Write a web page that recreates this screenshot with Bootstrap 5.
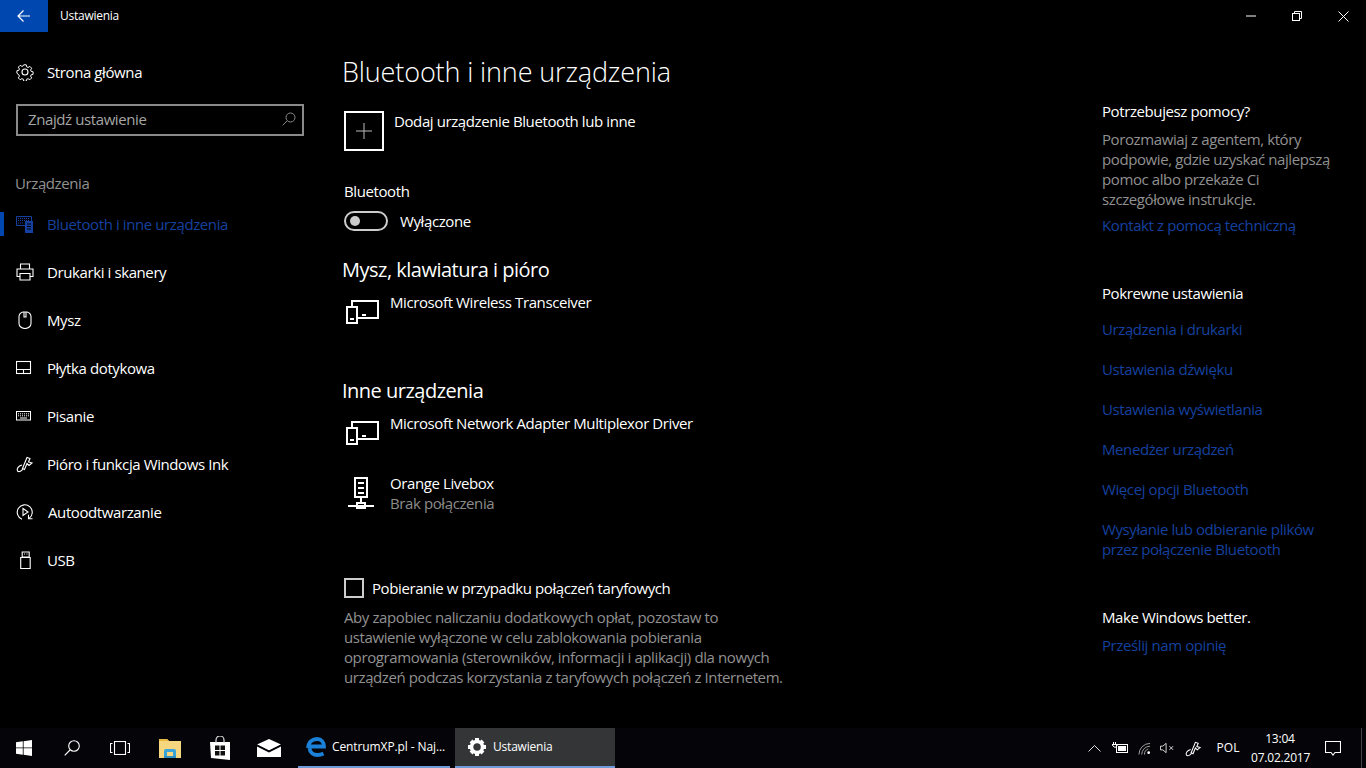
<!DOCTYPE html>
<html lang="pl"><head><meta charset="utf-8"><title>Ustawienia</title>
<link rel="stylesheet" href="https://cdn.jsdelivr.net/npm/bootstrap@5.3.0/dist/css/bootstrap.min.css">
<style>
html,body{height:100%;margin:0;background:#000;overflow:hidden}
body{font-family:"Open Sans","Noto Sans",sans-serif;font-size:15px;line-height:20px;color:#fff;letter-spacing:-.4px}
.shell{height:768px;width:1366px}
.titlebar{height:32px;flex:none}
.backbtn{width:48px;height:32px;background:#0047b0}
.apptitle{font-size:12px;margin-left:12px;letter-spacing:-.25px}
.winbtn{width:46px;height:32px}
.main{height:696px}
.side{width:320px;flex:none}
.homerow{height:48px;margin-top:16px;padding-left:16px}
.navicon{width:18px;height:18px;margin-right:13px;flex:none}
.searchbox{margin:8px 16px 0;height:32px;width:288px;border:2px solid #8a8a8a;padding:0 6px 2px 10px;color:#a6a6a6}
.sidehead{margin:37px 0 0 15px;height:20px;color:#919191}
.navrow{height:48px;padding-left:16px}
.navrow.sel{color:#15409f;border-left:4px solid #0047b0;padding-left:12px;height:24px;margin:19px 0 12px}
.autolabel{margin-left:1px}
.centerpane{width:760px;flex:none;padding-left:22px}
.pagetitle{font-size:27px;line-height:32px;font-weight:300;margin:24px 0 0;letter-spacing:-.13px}
.addrow{margin:23px 0 0 2px;height:40px}
.addbox{width:40px;height:40px;border:2px solid #fff;margin-right:10px}
.btlabel{margin:30px 0 0 2px}
.togglerow{margin:10px 0 0 2px;height:20px}
.switchy{width:44px;height:20px;border:2px solid #ccc;border-radius:10px;padding-left:4px;margin-right:12px}
.switchy i{display:block;width:10px;height:10px;border-radius:50%;background:#ccc}
.sect{font-size:20px;line-height:28px;margin:0;letter-spacing:-.5px}
.sect1{margin-top:25px}
.sect2{margin-top:25px}
.devrow{height:60px;margin-left:2px}
.devrow1{margin-top:8px}
.devicon{width:46px;height:40px;flex:none}
.dim{color:#8c8c8c}
.checkrow{margin:45px 0 0 2px;height:20px}
.checkboxy{width:20px;height:20px;border:2px solid #ccc;margin-right:8px}
.meter{margin:9px 0 0 2px;width:445px;color:#919191}
.rightpane{padding-left:22px;width:286px}
.righthead{margin-top:69px}
.helptext{margin-top:8px;color:#919191;width:240px}
.blue{color:#15409f;text-decoration:none;display:block;width:225px}
.h2blue{margin-top:6px}
.related{margin-top:48px}
.linkstack{margin-top:16px}
.linkstack .blue{margin-bottom:20px}
.better{margin-top:48px}
.taskbar{height:40px;flex:none;background:#050509}
.tbicon{width:48px;height:40px;flex:none}
.tbfile{width:50px;margin-left:1px}
.tbstore{width:49px}
.tbmail{width:50px}
.tbedge{width:152px;height:40px;margin-left:4px;border-bottom:2px solid #6f9bd8;padding-left:8px;font-size:12px;letter-spacing:-.1px}
.tbedge svg{margin-right:6px}
.tbset{width:160px;height:40px;margin-left:5px;background:#333537;border-bottom:2px solid #6f9bd8;padding-left:13px;font-size:12px;letter-spacing:-.2px}
.tbset svg{margin-right:7px}
.tbspace{flex:1}
.tray{width:25px;height:40px;flex:none}
.trayvol{width:20px}
.traypen{width:24px;margin-left:4px}
.lang{width:46px;margin-left:0;font-size:12px;letter-spacing:0;text-align:center}
.clock{width:58px;font-size:12px;line-height:19px;text-align:center;letter-spacing:-.2px}
.traynote{width:48px}
.peek{width:5px;height:40px;border-left:1px solid #444;margin-left:4px}
svg{display:block}
</style></head><body>
<div class="shell d-flex flex-column">
 <div class="titlebar d-flex align-items-center">
  <div class="backbtn d-flex align-items-center justify-content-center"><svg width="16" height="14" viewBox="0 0 16 14" fill="none" stroke="#fff" stroke-width="1.2"><path d="M2 7H14M7.500 1.500 2 7l5.500 5.500"/></svg></div>
  <div class="apptitle">Ustawienia</div>
  <div class="ms-auto d-flex">
   <div class="winbtn d-flex align-items-center justify-content-center"><svg width="10" height="2" viewBox="0 0 10 2"><path d="M0 1H10" stroke="#fff"/></svg></div>
   <div class="winbtn d-flex align-items-center justify-content-center"><svg width="10" height="10" viewBox="0 0 10 10" fill="none" stroke="#fff"><rect x=".5" y="2.500" width="7" height="7"/><path d="M2.500 2.500V.5h7v7h-2"/></svg></div>
   <div class="winbtn d-flex align-items-center justify-content-center"><svg width="11" height="11" viewBox="0 0 11 11" stroke="#fff"><path d="M.5.5l10 10M10.500.5l-10 10"/></svg></div>
  </div>
 </div>
 <div class="main d-flex">
  <div class="side">
   <div class="homerow d-flex align-items-center"><svg class="navicon" viewBox="0 0 18 18" fill="none" stroke="#fff" stroke-width="1.100"><circle cx="9" cy="9" r="3"/><path d="M7.600 1h2.800l.5 2.300 1.500.7 2-1.200 2 2-1.200 2 .6 1.500 2.200.5v2.800l-2.200.5-.6 1.500 1.200 2-2 2-2-1.200-1.500.6-.5 2.300H7.600l-.5-2.300-1.500-.6-2 1.200-2-2 1.200-2-.6-1.500L0 10.400V7.600l2.200-.5.600-1.500-1.200-2 2-2 2 1.200 1.500-.7z" transform="translate(.9 .9) scale(.9)"/></svg><span>Strona główna</span></div>
   <div class="searchbox d-flex align-items-center justify-content-between"><span>Znajdź ustawienie</span><svg width="14" height="14" viewBox="0 0 14 14" fill="none" stroke="#8a8a8a"><circle cx="8.500" cy="5.500" r="4.500"/><path d="M5 9 .7 13.300"/></svg></div>
   <div class="sidehead">Urządzenia</div>
   <div>
    <div class="navrow sel d-flex align-items-center"><svg class="navicon" viewBox="0 0 18 18" fill="none" stroke="#15409f"><path d="M.5 1.500h15v7H9.500v2H.5z"/><path d="M2 3.500h11M2 5.500h11M2 8h6" stroke-dasharray="1 1"/><rect x="9.500" y="6.500" width="7" height="11" fill="#15409f"/><path d="M11 9h4M11 11.500h4M11 14h4" stroke="#000"/></svg><span>Bluetooth i inne urządzenia</span></div>
    <div class="navrow d-flex align-items-center"><svg class="navicon" viewBox="0 0 18 18" fill="none" stroke="#fff" stroke-width="1.100"><path d="M4.500 6V1h9v5M4 13.500H1V6h16v7.500h-3"/><path d="M4 10.500h10v6.500H4z"/></svg><span>Drukarki i skanery</span></div>
    <div class="navrow d-flex align-items-center"><svg class="navicon" viewBox="0 0 18 18" fill="none" stroke="#fff" stroke-width="1.100"><path d="M3 5.500a5.500 5 0 0 1 4-4.500h4a5.500 5 0 0 1 4 4.500v7a6 5 0 0 1-12 0zM8 1v5h2V1"/></svg><span>Mysz</span></div>
    <div class="navrow d-flex align-items-center"><svg class="navicon" viewBox="0 0 18 18" fill="none" stroke="#fff" stroke-width="1.100"><rect x=".5" y="2.500" width="14" height="12"/><path d="M.5 10.500h14M7.500 10.500v4"/></svg><span>Płytka dotykowa</span></div>
    <div class="navrow d-flex align-items-center"><svg class="navicon" viewBox="0 0 18 18" fill="none" stroke="#fff"><rect x=".5" y="4.500" width="14" height="8.500"/><path d="M2 6.800h11M2 8.800h11" stroke-dasharray="1 1"/><path d="M4 11h7"/></svg><span>Pisanie</span></div>
    <div class="navrow d-flex align-items-center"><svg class="navicon" viewBox="0 0 18 18" fill="none" stroke="#fff" stroke-width="1.100"><path d="M6.500 13.500 11 2.500l3 1-1.500 3.500 3.500 1-3 2.500-2-2-2.500 6zM6 10C2 11 .5 14 1.500 16c1.500 1.500 4.500 0 5.500-2.500"/></svg><span>Pióro i funkcja Windows Ink</span></div>
    <div class="navrow d-flex align-items-center"><svg class="navicon" viewBox="0 0 18 18" fill="none" stroke="#fff" stroke-width="1.100"><path d="M6 16.300A7.500 7.500 0 1 1 13 15.500"/><path d="M7 5.500 12 9l-5 3.500z"/><path d="M12.500 11.800v4h4"/></svg><span class="autolabel">Autoodtwarzanie</span></div>
    <div class="navrow d-flex align-items-center"><svg class="navicon" viewBox="0 0 18 18" fill="none" stroke="#fff" stroke-width="1.100"><path d="M6.200 1h7v5h-7zM4.700 6.500h9.500v11H4.700z"/><path d="M8 3h1M10.500 3h1"/></svg><span>USB</span></div>
   </div>
  </div>
  <div class="centerpane">
   <h1 class="pagetitle">Bluetooth i inne urządzenia</h1>
   <div class="addrow d-flex"><div class="addbox d-flex align-items-center justify-content-center"><svg width="16" height="16" viewBox="0 0 16 16" stroke="#bbb"><path d="M8 0V16M0 8H16"/></svg></div><div>Dodaj urządzenie Bluetooth lub inne</div></div>
   <div class="btlabel">Bluetooth</div>
   <div class="togglerow d-flex align-items-center"><div class="switchy d-flex align-items-center"><i></i></div><span>Wyłączone</span></div>
   <h2 class="sect sect1">Mysz, klawiatura i pióro</h2>
   <div class="devrow devrow1 d-flex"><svg class="devicon" viewBox="0 0 46 40" fill="none" stroke="#fff" stroke-width="2"><path d="M8 14V9H34V26H14"/><rect x="3" y="15" width="10" height="16"/><path d="M6 27h4M18 23h4"/></svg><div>Microsoft Wireless Transceiver</div></div>
   <h2 class="sect sect2">Inne urządzenia</h2>
   <div class="devrow devrow1 d-flex"><svg class="devicon" viewBox="0 0 46 40" fill="none" stroke="#fff" stroke-width="2"><path d="M8 14V9H34V26H14"/><rect x="3" y="15" width="10" height="16"/><path d="M6 27h4M18 23h4"/></svg><div>Microsoft Network Adapter Multiplexor Driver</div></div>
   <div class="devrow d-flex"><svg class="devicon" viewBox="0 0 46 40" fill="none" stroke="#fff" stroke-width="2"><rect x="11" y="5" width="12" height="19"/><path d="M14 10h6M14 15h6M14 20h6M17 24v6M4 33h26"/><rect x="13" y="30" width="8" height="5"/></svg><div>Orange Livebox<div class="dim">Brak połączenia</div></div></div>
   <div class="checkrow d-flex align-items-center"><div class="checkboxy"></div><span>Pobieranie w przypadku połączeń taryfowych</span></div>
   <div class="meter">Aby zapobiec naliczaniu dodatkowych opłat, pozostaw to ustawienie wyłączone w celu zablokowania pobierania oprogramowania (sterowników, informacji i aplikacji) dla nowych urządzeń podczas korzystania z taryfowych połączeń z Internetem.</div>
  </div>
  <div class="rightpane">
   <div class="righthead">Potrzebujesz pomocy?</div>
   <div class="helptext">Porozmawiaj z agentem, który podpowie, gdzie uzyskać najlepszą pomoc albo przekaże Ci szczegółowe instrukcje.</div>
   <a class="blue h2blue" href="#">Kontakt z pomocą techniczną</a>
   <div class="related">Pokrewne ustawienia</div>
   <div class="linkstack">
    <a class="blue" href="#">Urządzenia i drukarki</a>
    <a class="blue" href="#">Ustawienia dźwięku</a>
    <a class="blue" href="#">Ustawienia wyświetlania</a>
    <a class="blue" href="#">Menedżer urządzeń</a>
    <a class="blue" href="#">Więcej opcji Bluetooth</a>
    <a class="blue" href="#">Wysyłanie lub odbieranie plików przez połączenie Bluetooth</a>
   </div>
   <div class="better">Make Windows better.</div>
   <a class="blue mt-2" href="#">Prześlij nam opinię</a>
  </div>
 </div>
 <div class="taskbar d-flex align-items-center">
  <div class="tbicon d-flex align-items-center justify-content-center"><svg width="16" height="16" viewBox="0 0 16 16" fill="#fff"><path d="M0 2.300 6.800 1.300V7.500H0zM7.600 1.200 16 0V7.500H7.600zM0 8.300H6.800V14.700L0 13.700zM7.600 8.300H16V16L7.600 14.800z"/></svg></div>
  <div class="tbicon d-flex align-items-center justify-content-center"><svg width="16" height="16" viewBox="0 0 16 16" fill="none" stroke="#fff" stroke-width="1.100"><circle cx="10" cy="6" r="5.300"/><path d="M6 10 .7 15.300"/></svg></div>
  <div class="tbicon d-flex align-items-center justify-content-center"><svg width="20" height="14" viewBox="0 0 20 14" fill="none" stroke="#fff" stroke-width="1.100"><rect x="4.500" y=".5" width="11" height="13"/><path d="M2.500 2.500H.5v9h2M17.500 2.500h2v9h-2"/></svg></div>
  <div class="tbicon tbfile d-flex align-items-center justify-content-center"><svg width="22" height="20" viewBox="0 0 22 20"><path d="M0 1h8l2 2h12v17H0z" fill="#f6d77f"/><path d="M0 1h8l2 2H0z" fill="#e8b93f"/><path d="M5 18v-5a2 2 0 0 1 2-2h8a2 2 0 0 1 2 2v5h-3v-4H8v4z" fill="#37a5d9"/><path d="M5 18h12v2H5z" fill="#2e8fc0"/></svg></div>
  <div class="tbicon tbstore d-flex align-items-center justify-content-center"><svg width="20" height="24" viewBox="0 0 20 24"><path d="M0 6H20V24L1 22z" fill="#fff"/><path d="M6 7V4a4 4 0 0 1 8 0v3" fill="none" stroke="#ddd" stroke-width="1.200"/><path d="M5 9.500h4.500V14H5zM10.500 9.500H15V14H10.500zM5 15h4.500v4.500H5zM10.500 15H15v4.500H10.500z" fill="#111"/></svg></div>
  <div class="tbicon tbmail d-flex align-items-center justify-content-center"><svg width="24" height="18" viewBox="0 0 24 18" fill="#fff"><path d="M0 5.500 12 0l12 5.500-12 6z"/><path d="M0 7.500l12 6 12-6V18H0z"/><path d="M0 6 12 12 24 6" stroke="#050509" fill="none"/></svg></div>
  <div class="tbedge d-flex align-items-center"><svg width="20" height="20" viewBox="0 0 20 20" fill="none" stroke="#1b80d8" stroke-width="3.800"><path d="M2 11C2.500 5 6.500 2 11 2c4.500 0 7 3.500 7 7.500H4M3.500 11c.3 4.500 4 7 8 7 2 0 4-.5 6-1.500"/></svg><span>CentrumXP.pl - Naj...</span></div>
  <div class="tbset d-flex align-items-center"><svg width="18" height="18" viewBox="0 0 18 18"><circle cx="9" cy="9" r="5.500" fill="none" stroke="#fff" stroke-width="3.500"/><path d="M7 0h4v4H7zM7 14h4v4H7zM0 7h4v4H0zM14 7h4v4h-4zM1.600 4.400 4.400 1.600 7 4.200 4.200 7zM13.600 1.600l2.800 2.800L13.800 7 11 4.200zM1.600 13.600 4.200 11 7 13.800l-2.600 2.600zM11 13.800 13.800 11l2.600 2.600-2.800 2.800z" fill="#fff"/></svg><span>Ustawienia</span></div>
  <div class="tbspace"></div>
  <div class="tray d-flex align-items-center justify-content-center"><svg width="13" height="7" viewBox="0 0 13 7" fill="none" stroke="#ddd"><path d="M.5 6.500l6-6 6 6"/></svg></div>
  <div class="tray d-flex align-items-center justify-content-center"><svg width="16" height="12" viewBox="0 0 16 12" fill="none" stroke="#fff"><rect x="4.500" y="2.500" width="11" height="8"/><path d="M6 4h8v5H6z" fill="#fff" stroke="none"/><path d="M1.500 0v2M3.500 0v2M0 2.500h5v1.500l-2 1.500-2-1.500z"/></svg></div>
  <div class="tray d-flex align-items-center justify-content-center"><svg width="13" height="13" viewBox="0 0 14 13" fill="none" stroke="#aaa"><path d="M1 13A12 12 0 0 1 13 1M4 13A9 9 0 0 1 13 4M7 13A6 6 0 0 1 11 7"/><circle cx="11.500" cy="11" r="1.500" fill="#fff" stroke="none"/></svg></div>
  <div class="tray trayvol d-flex align-items-center justify-content-center"><svg width="15" height="12" viewBox="0 0 16 12" fill="none" stroke="#ddd"><path d="M.5 4H3L6.500 1v10L3 8H.5zM10 4l4 4M14 4l-4 4"/></svg></div>
  <div class="tray traypen d-flex align-items-center justify-content-center"><svg width="17" height="17" viewBox="0 0 18 18" fill="none" stroke="#fff" stroke-width="1.100"><path d="M6.500 13.500 11 2.500l3 1-1.500 3.500 3.500 1-3 2.500-2-2-2.500 6zM6 10C2 11 .5 14 1.500 16c1.500 1.500 4.500 0 5.500-2.500"/></svg></div>
  <div class="lang">POL</div>
  <div class="clock"><div>13:04</div><div>07.02.2017</div></div>
  <div class="tray traynote d-flex align-items-center justify-content-center"><svg width="16" height="15" viewBox="0 0 16 15" fill="none" stroke="#fff" stroke-width="1.100"><path d="M.5.500h15v11H10l-2 2.500-2-2.500H.5z"/></svg></div>
  <div class="peek"></div>
 </div>
</div>
</body></html>
